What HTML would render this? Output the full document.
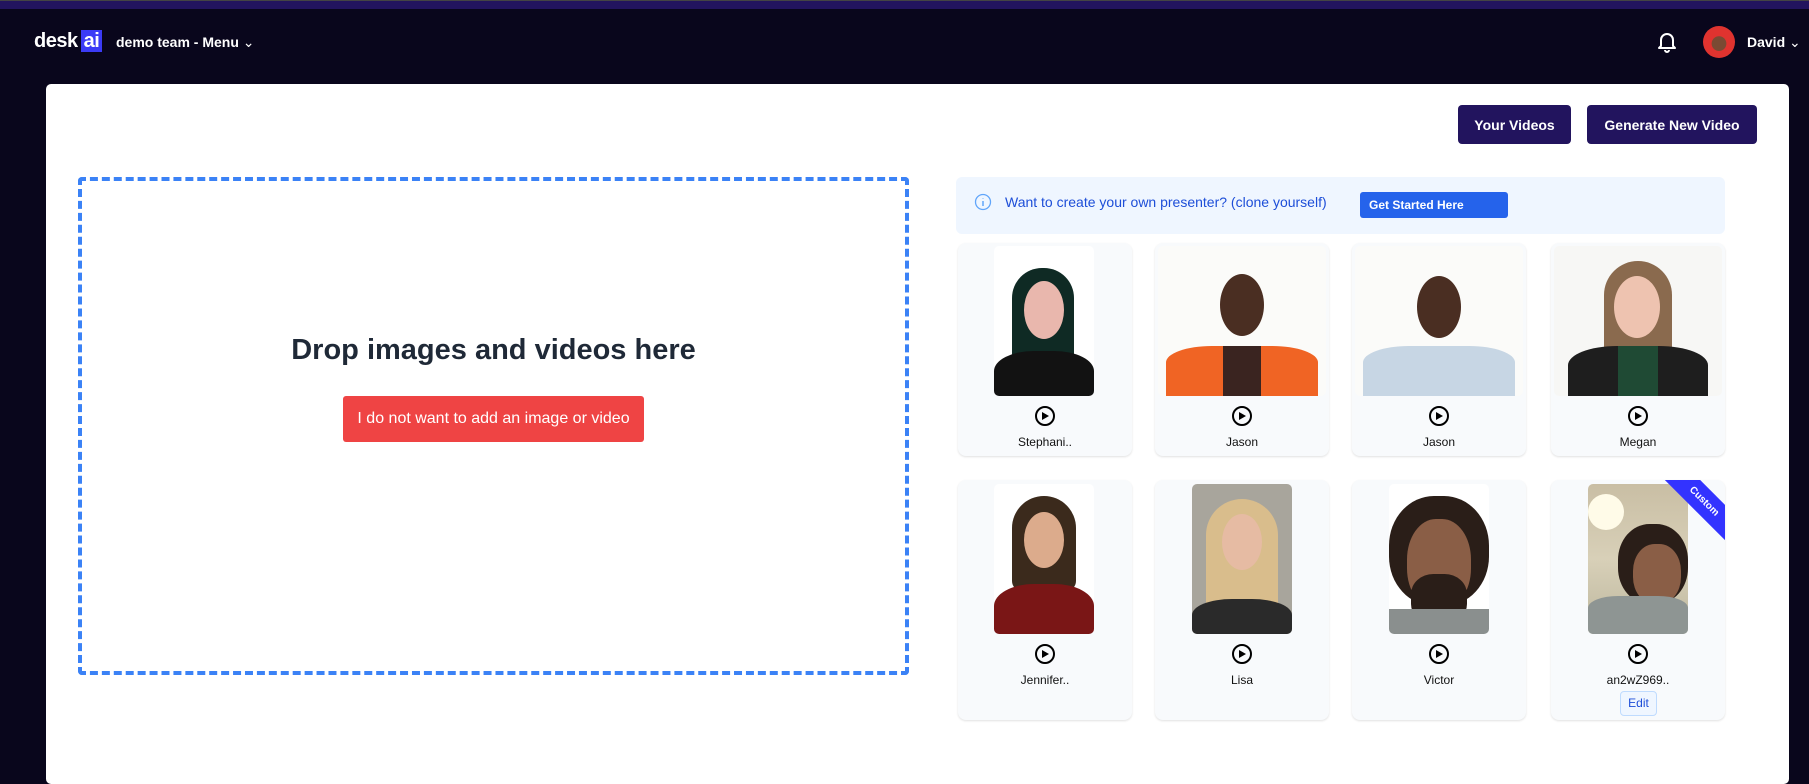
<!DOCTYPE html>
<html><head><meta charset="utf-8"><style>
*{margin:0;padding:0;box-sizing:border-box}
body{width:1809px;height:743px;overflow:hidden;background:#09061c;font-family:"Liberation Sans",sans-serif;position:relative}
.abs{position:absolute}
.topbar{left:0;top:0;width:1809px;height:9px;background:#22145e;border-top:1px solid #444}
.card{left:46px;top:84px;width:1743px;height:700px;background:#fff;border-radius:5px}
.btn{background:#22145e;color:#fff;font-weight:bold;font-size:14px;border-radius:4px;display:flex;align-items:center;justify-content:center}
.drop{left:78px;top:177px;width:831px;height:498px;border:4px dashed #3b82f6;border-radius:4px}
.pc{width:174px;background:#f8fafc;border-radius:8px;box-shadow:0 1px 2px rgba(0,0,0,.12)}
.img{position:absolute;overflow:hidden;border-radius:5px}
.play{position:absolute;width:20px;height:20px;border:2.5px solid #000;border-radius:50%;left:77px}
.play:after{content:"";position:absolute;left:5px;top:3.5px;border-left:7px solid #000;border-top:4.5px solid transparent;border-bottom:4.5px solid transparent}
.name{position:absolute;width:100%;text-align:center;font-size:12px;color:#111}
</style></head><body>
<div class="abs topbar"></div>
<div class="abs" style="left:34px;top:30px;font-size:20px;font-weight:bold;color:#fff;letter-spacing:-0.5px">desk<span style="background:#3b3bf6;padding:0 3px;margin-left:3px">ai</span></div>
<div class="abs" style="left:116px;top:34px;font-size:14px;font-weight:bold;color:#fff">demo team - Menu <span style="font-weight:normal">&#8964;</span></div>
<svg class="abs" style="left:1657px;top:31px" width="20" height="22" viewBox="0 0 20 22"><path d="M4 15V9a6 6 0 0 1 12 0v6l2 2H2z M8 19a2 2 0 0 0 4 0" fill="none" stroke="#fff" stroke-width="2" stroke-linejoin="round"/></svg>
<div class="abs" style="left:1703px;top:26px;width:32px;height:32px;border-radius:50%;background:radial-gradient(circle at 50% 55%,#7a4a33 0 30%,#e0332f 32%)"></div>
<div class="abs" style="left:1747px;top:34px;font-size:14px;font-weight:bold;color:#fff">David <span style="font-weight:normal">&#8964;</span></div>
<div class="abs card"></div>
<div class="abs btn" style="left:1458px;top:105px;width:113px;height:39px">Your Videos</div>
<div class="abs btn" style="left:1587px;top:105px;width:170px;height:39px">Generate New Video</div>
<div class="abs drop"></div>
<div class="abs" style="left:78px;top:334px;width:831px;text-align:center;font-size:29px;font-weight:bold;color:#1f2937">Drop images and videos here</div>
<div class="abs" style="left:343px;top:396px;width:301px;height:46px;background:#ef4444;border-radius:3px;color:#fff;font-size:16px;display:flex;align-items:center;justify-content:center">I do not want to add an image or video</div>
<div class="abs" style="left:956px;top:177px;width:769px;height:57px;background:#eff6ff;border-radius:6px"></div>
<svg class="abs" style="left:974px;top:193px" width="18" height="18"><circle cx="9" cy="9" r="7.5" fill="none" stroke="#60a5fa" stroke-width="1.3"/><path d="M9 8v5M9 5.5v.5" stroke="#60a5fa" stroke-width="1.5"/></svg>
<div class="abs" style="left:1005px;top:194px;font-size:14px;color:#1d4ed8">Want to create your own presenter? (clone yourself)</div>
<div class="abs" style="left:1360px;top:192px;width:148px;height:26px;background:#2563eb;border-radius:3px;color:#fff;font-size:12px;font-weight:bold;padding:6px 9px">Get Started Here</div>

<div class="abs pc" style="left:958px;top:243px;height:213px">
 <div class="img" style="left:36px;top:3px;width:100px;height:150px;background:#fff">
  <div class="abs" style="left:18px;top:22px;width:62px;height:100px;background:#0f2a24;border-radius:30px 30px 10px 10px"></div>
  <div class="abs" style="left:30px;top:35px;width:40px;height:58px;background:#e9b7ad;border-radius:50%"></div>
  <div class="abs" style="left:0;top:105px;width:100px;height:50px;background:#121212;border-radius:40% 40% 0 0"></div></div>
 <div class="play" style="top:163px"></div><div class="name" style="top:192px">Stephani..</div></div>
<div class="abs pc" style="left:1155px;top:243px;height:213px">
 <div class="img" style="left:3px;top:3px;width:168px;height:150px;background:#fbfbf9">
  <div class="abs" style="left:62px;top:28px;width:44px;height:62px;background:#4a2e22;border-radius:50%"></div>
  <div class="abs" style="left:8px;top:100px;width:152px;height:55px;background:#f06424;border-radius:30% 30% 0 0"></div>
  <div class="abs" style="left:65px;top:100px;width:38px;height:55px;background:#3a2420"></div></div>
 <div class="play" style="top:163px"></div><div class="name" style="top:192px">Jason</div></div>
<div class="abs pc" style="left:1352px;top:243px;height:213px">
 <div class="img" style="left:3px;top:3px;width:168px;height:150px;background:#fbfbf9">
  <div class="abs" style="left:62px;top:30px;width:44px;height:62px;background:#4a2e22;border-radius:50%"></div>
  <div class="abs" style="left:8px;top:100px;width:152px;height:55px;background:#c7d6e4;border-radius:30% 30% 0 0"></div></div>
 <div class="play" style="top:163px"></div><div class="name" style="top:192px">Jason</div></div>
<div class="abs pc" style="left:1551px;top:243px;height:213px">
 <div class="img" style="left:3px;top:3px;width:168px;height:150px;background:#f7f7f5">
  <div class="abs" style="left:50px;top:15px;width:68px;height:110px;background:#8a6a4e;border-radius:34px 34px 10px 10px"></div>
  <div class="abs" style="left:60px;top:30px;width:46px;height:62px;background:#eec3b0;border-radius:50%"></div>
  <div class="abs" style="left:14px;top:100px;width:140px;height:55px;background:#1e1e1e;border-radius:35% 35% 0 0"></div>
  <div class="abs" style="left:64px;top:100px;width:40px;height:55px;background:#1f4a34"></div></div>
 <div class="play" style="top:163px"></div><div class="name" style="top:192px">Megan</div></div>

<div class="abs pc" style="left:958px;top:480px;height:240px">
 <div class="img" style="left:36px;top:4px;width:100px;height:150px;background:#fff">
  <div class="abs" style="left:18px;top:12px;width:64px;height:95px;background:#3b2a1c;border-radius:32px 32px 10px 10px"></div>
  <div class="abs" style="left:30px;top:28px;width:40px;height:56px;background:#dcab8c;border-radius:50%"></div>
  <div class="abs" style="left:0;top:100px;width:100px;height:55px;background:#7a1616;border-radius:40% 40% 0 0"></div></div>
 <div class="play" style="top:164px"></div><div class="name" style="top:193px">Jennifer..</div></div>
<div class="abs pc" style="left:1155px;top:480px;height:240px">
 <div class="img" style="left:37px;top:4px;width:100px;height:150px;background:#a8a59c">
  <div class="abs" style="left:14px;top:15px;width:72px;height:125px;background:#d9bd8c;border-radius:36px 36px 10px 10px"></div>
  <div class="abs" style="left:30px;top:30px;width:40px;height:56px;background:#e6bba3;border-radius:50%"></div>
  <div class="abs" style="left:0;top:115px;width:100px;height:40px;background:#2a2a2a;border-radius:40% 40% 0 0"></div></div>
 <div class="play" style="top:164px"></div><div class="name" style="top:193px">Lisa</div></div>
<div class="abs pc" style="left:1352px;top:480px;height:240px">
 <div class="img" style="left:37px;top:4px;width:100px;height:150px;background:#fff">
  <div class="abs" style="left:0;top:12px;width:100px;height:110px;background:#2a1e18;border-radius:45%"></div>
  <div class="abs" style="left:18px;top:35px;width:64px;height:90px;background:#8a5e46;border-radius:45%"></div>
  <div class="abs" style="left:22px;top:90px;width:56px;height:50px;background:#2a1e18;border-radius:40%"></div>
  <div class="abs" style="left:0;top:125px;width:100px;height:30px;background:#8a8f8e"></div></div>
 <div class="play" style="top:164px"></div><div class="name" style="top:193px">Victor</div></div>
<div class="abs pc" style="left:1551px;top:480px;height:240px;overflow:hidden">
 <div class="img" style="left:37px;top:4px;width:100px;height:150px;background:linear-gradient(#c9bea4,#d8d0b8 50%,#bdb79e)">
  <div class="abs" style="left:0;top:10px;width:36px;height:36px;border-radius:50%;background:#fffbe8"></div>
  <div class="abs" style="left:30px;top:40px;width:70px;height:80px;background:#2a1e18;border-radius:45%"></div>
  <div class="abs" style="left:45px;top:60px;width:48px;height:60px;background:#8a5e46;border-radius:45%"></div>
  <div class="abs" style="left:0;top:112px;width:100px;height:40px;background:#8e9593;border-radius:30% 30% 0 0"></div></div>
 <div class="abs" style="left:93px;top:9px;width:120px;height:25px;background:#3333ff;transform:rotate(45deg);color:#fff;font-size:10px;font-weight:bold;text-align:center;line-height:25px">Custom</div>
 <div class="play" style="top:164px"></div><div class="name" style="top:193px">an2wZ969..</div>
 <div class="abs" style="left:69px;top:211px;width:37px;height:25px;background:#eff6ff;border:1px solid #bfdbfe;border-radius:4px;color:#1d4ed8;font-size:12px;text-align:center;line-height:23px">Edit</div></div>
</body></html>
